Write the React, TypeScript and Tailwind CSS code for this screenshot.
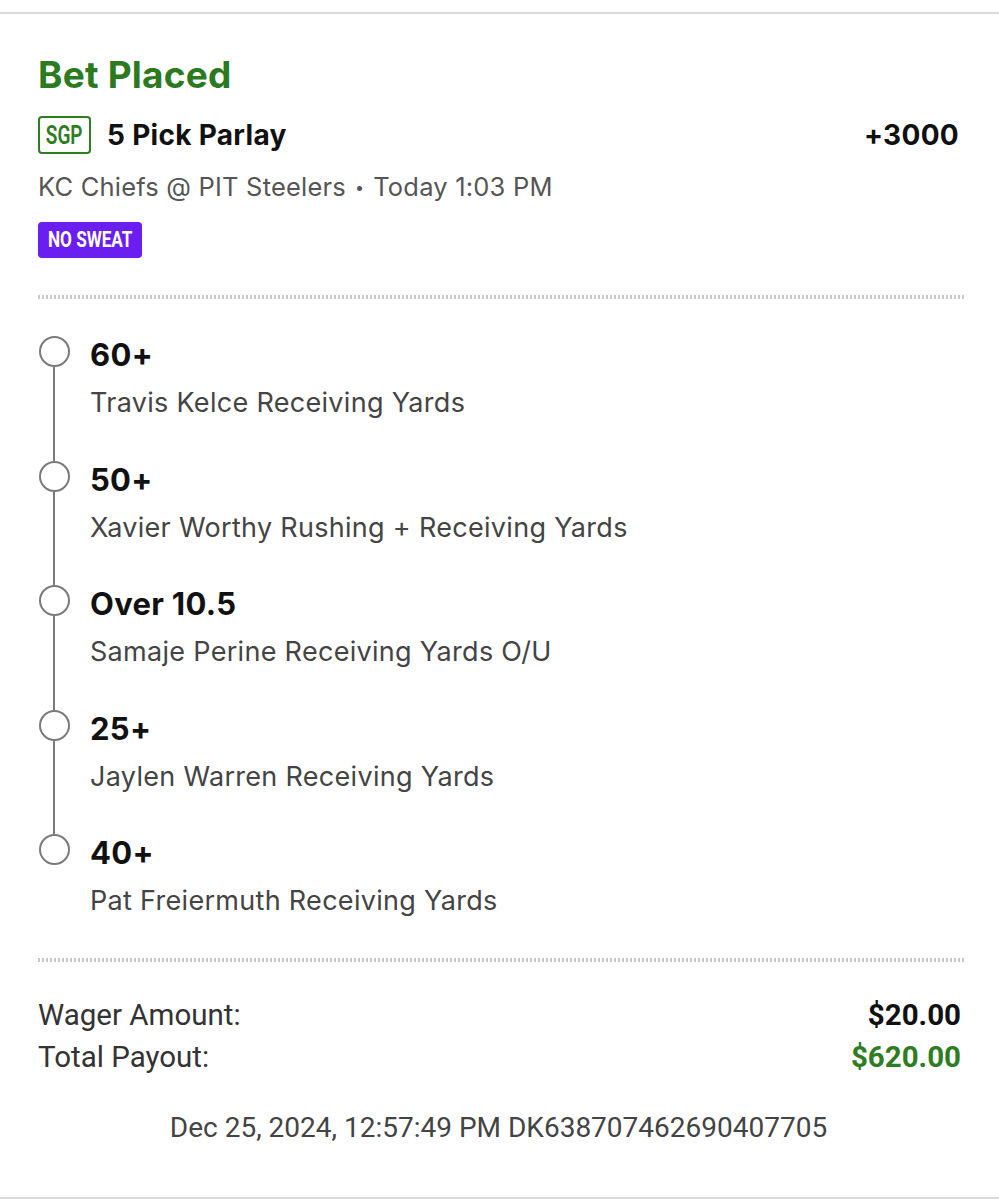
import React from "react";

const legs = [
  { t: "60+", s: "Travis Kelce Receiving Yards" },
  { t: "50+", s: "Xavier Worthy Rushing + Receiving Yards" },
  { t: "Over 10.5", s: "Samaje Perine Receiving Yards O/U" },
  { t: "25+", s: "Jaylen Warren Receiving Yards" },
  { t: "40+", s: "Pat Freiermuth Receiving Yards" },
];

function Dotted() {
  return (
    <div className="h-[4px] w-full bg-[repeating-linear-gradient(90deg,#c9c9c9_0_2px,transparent_2px_4px)]" />
  );
}

export default function App() {
  return (
    <div className="w-[999px] h-[1200px] bg-white flex flex-col font-['Inter',sans-serif] text-[#111]">
      <div className="h-[12px]" />
      <div className="h-[2px] bg-[#d9d9d9]" />
      <div className="flex-1 flex flex-col pl-[38px] pr-[38px]">
        <div className="h-[39px]" />
        <div className="text-[37px] leading-[44px] font-bold text-[#2b7a1f] tracking-[0.2px]">Bet Placed</div>
        <div className="h-[19px]" />
        <div className="flex items-center h-[38px] pr-[2px]">
          <div className="w-[53px] h-[38px] border-2 border-[#2e7d22] rounded-[4px] flex items-center justify-center text-[#2e7d22] text-[25px] font-semibold font-['Roboto',sans-serif] leading-none">
            <span className="inline-block scale-x-[0.76]">SGP</span>
          </div>
          <div className="ml-[16px] text-[28px] font-bold leading-none tracking-[0.3px]">5 Pick Parlay</div>
          <div className="ml-auto text-[28px] font-bold leading-none tracking-[0.3px]">+3000</div>
        </div>
        <div className="h-[18px]" />
        <div className="text-[25.5px] leading-[30px] text-[#555] tracking-[0.2px] flex items-center">
          <span>KC Chiefs @ PIT Steelers</span>
          <span className="text-[16px] mx-[9px]">•</span>
          <span>Today 1:03 PM</span>
        </div>
        <div className="h-[20px]" />
        <div className="self-start h-[36px] w-[104px] rounded-[4px] bg-[#6a1ff0] flex items-center justify-center text-white text-[22px] font-bold font-['Roboto',sans-serif] leading-none">
          <span className="inline-block scale-x-[0.78] whitespace-nowrap">NO SWEAT</span>
        </div>
        <div className="h-[37px]" />
        <div className="mr-[-4px]"><Dotted /></div>
        <div className="h-[37px]" />
        <div className="flex flex-col">
          {legs.map((l, i) => {
            const last = i === legs.length - 1;
            return (
              <div key={i} className={`flex ${last ? "" : "h-[124.5px]"}`}>
                <div className="w-[32px] flex flex-col items-center">
                  <div className="w-[31px] h-[31px] rounded-full border-2 border-[#7a7a7a] shrink-0" />
                  {!last && <div className="w-[2px] flex-1 bg-[#7a7a7a]" />}
                </div>
                <div className="ml-[20px] flex flex-col pt-[1px]">
                  <div className="text-[31px] leading-[36px] font-bold tracking-[0.3px]">{l.t}</div>
                  <div className="h-[14px]" />
                  <div className="text-[27px] leading-[32px] text-[#444] tracking-[0.3px]">{l.s}</div>
                </div>
              </div>
            );
          })}
        </div>
        <div className="h-[41px]" />
        <div className="mr-[-4px]"><Dotted /></div>
        <div className="h-[32px]" />
        <div className="flex flex-col font-['Roboto',sans-serif]">
          <div className="flex items-center justify-between h-[42px]">
            <span className="text-[29.5px] text-[#333]">Wager Amount:</span>
            <span className="text-[29.5px] font-bold text-[#111]">$20.00</span>
          </div>
          <div className="flex items-center justify-between h-[42px]">
            <span className="text-[29.5px] text-[#333]">Total Payout:</span>
            <span className="text-[29.5px] font-bold text-[#2e7d22]">$620.00</span>
          </div>
          <div className="h-[35px]" />
          <div className="text-center text-[28px] leading-[30px] text-[#444] pr-[2px]">Dec 25, 2024, 12:57:49 PM DK638707462690407705</div>
        </div>
      </div>
      <div className="h-[2px] bg-[#d9d9d9]" />
      <div className="h-[1px]" />
    </div>
  );
}
